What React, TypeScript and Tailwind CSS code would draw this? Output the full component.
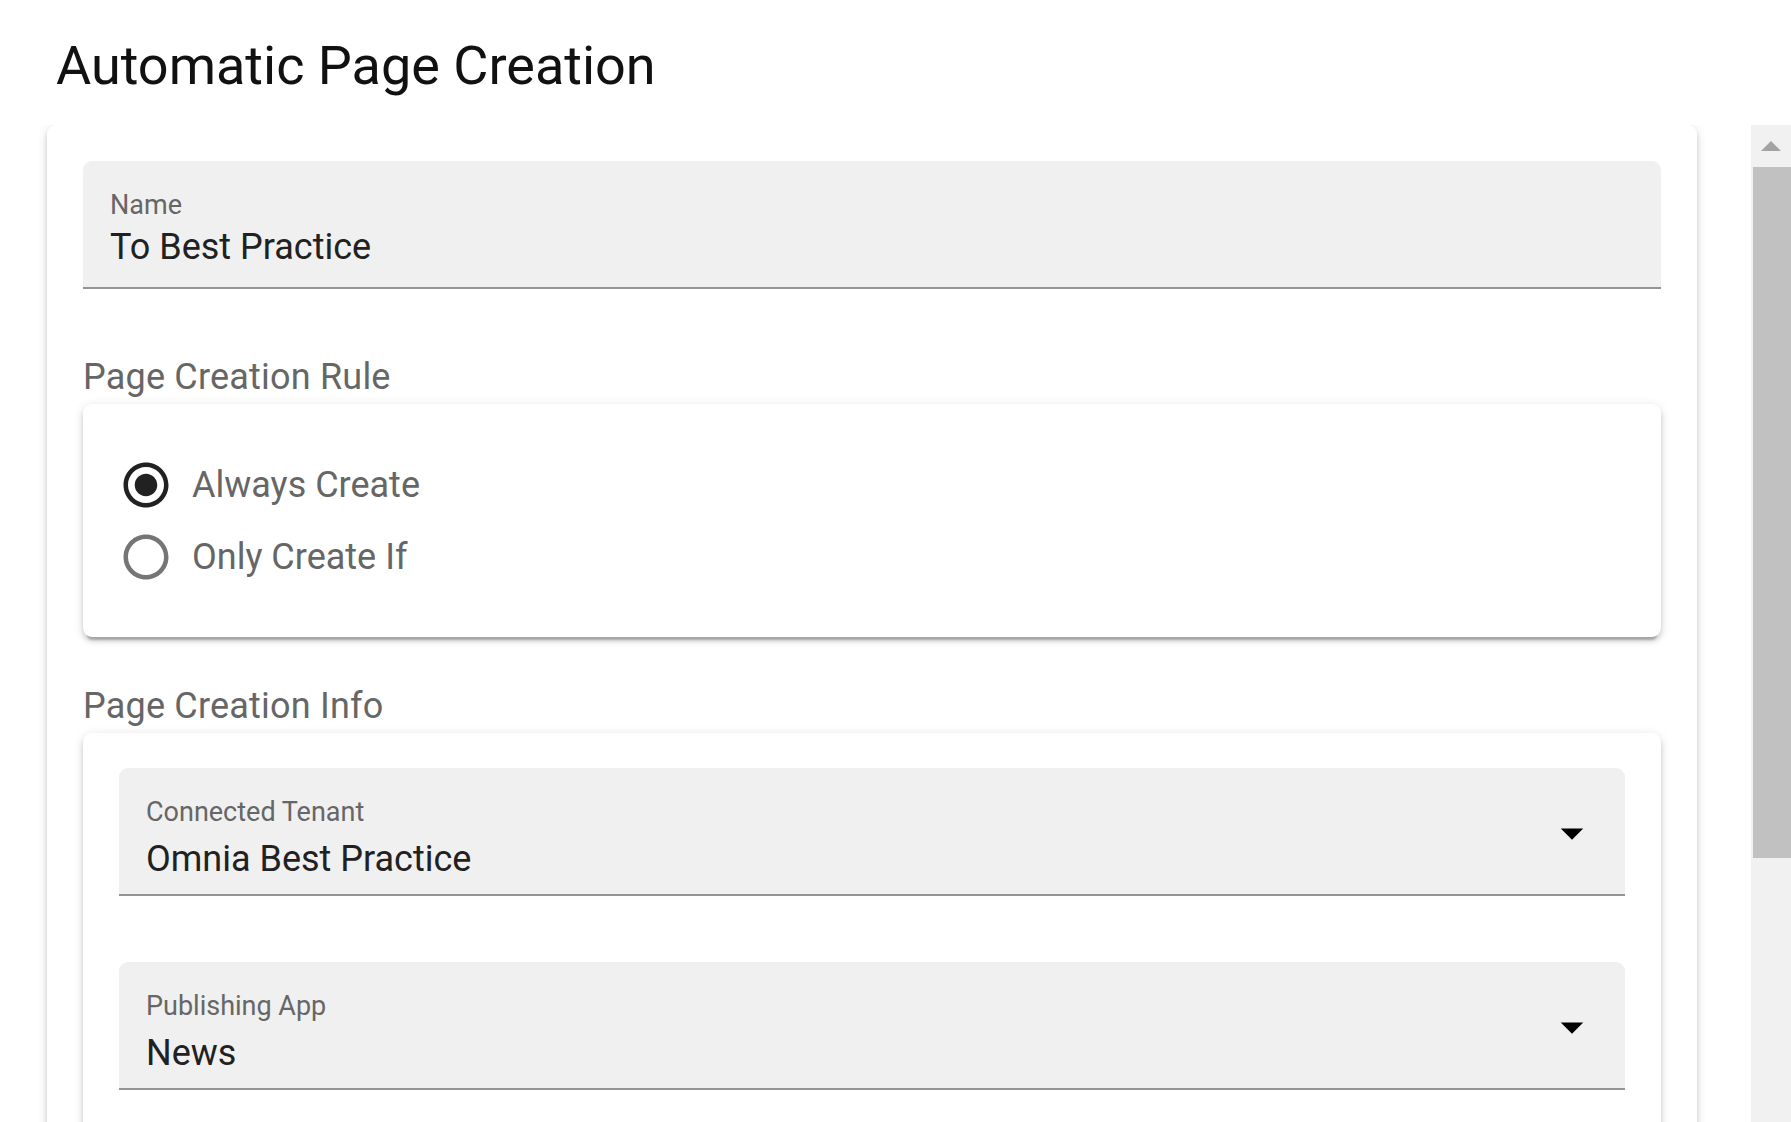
import { ReactNode } from "react";

const FONT = "font-['Roboto','Noto_Sans',sans-serif]";

function TextField({ label, value, select }: { label: string; value: string; select?: boolean }) {
  return (
    <div className="relative h-[128px] rounded-t-[9px] bg-[#f0f0f0] border-b-2 border-[#949494] px-[27px] pt-[28px]">
      <div className="text-[27px] leading-[32px] text-[#666666]">{label}</div>
      <div className={`${select ? "mt-[9px]" : "mt-[4px]"} text-[36px] leading-[44px] text-[#212121]`}>{value}</div>
      {select && (
        <svg
          viewBox="0 0 24 24"
          className="absolute right-[26px] top-[38px] w-[54px] h-[54px]"
          fill="#000000"
        >
          <path d="M7 10l5 5 5-5z" />
        </svg>
      )}
    </div>
  );
}

function Radio({ label, checked }: { label: string; checked?: boolean }) {
  return (
    <div className="flex items-center h-[72px]">
      <svg viewBox="0 0 24 24" className="w-[54px] h-[54px] shrink-0" fill={checked ? "#212121" : "#757575"}>
        {checked ? (
          <path d="M12 7c-2.76 0-5 2.24-5 5s2.24 5 5 5 5-2.24 5-5-2.24-5-5-5zm0-5C6.48 2 2 6.48 2 12s4.48 10 10 10 10-4.48 10-10S17.52 2 12 2zm0 18c-4.42 0-8-3.58-8-8s3.58-8 8-8 8 3.58 8 8-3.58 8-8 8z" />
        ) : (
          <path d="M12 2C6.48 2 2 6.48 2 12s4.48 10 10 10 10-4.48 10-10S17.52 2 12 2zm0 18c-4.42 0-8-3.58-8-8s3.58-8 8-8 8 3.58 8 8-3.58 8-8 8z" />
        )}
      </svg>
      <span className="ml-[19px] text-[36px] leading-[44px] text-[#666666]">{label}</span>
    </div>
  );
}

function Section({ title, children }: { title: string; children: ReactNode }) {
  return (
    <div>
      <div className="text-[36px] leading-[44px] tracking-[0.2px] text-[#666666]">{title}</div>
      {children}
    </div>
  );
}

export default function App() {
  return (
    <div className={`${FONT} h-[1122px] overflow-hidden bg-white`}>
      <h1 className="pt-[34px] pl-[56px] text-[54px] leading-[64px] font-normal text-[#111111]">
        Automatic Page Creation
      </h1>

      <div className="mt-[27px] flex h-[997px]">
        {/* scroll content */}
        <div className="flex-1 overflow-hidden">
          <div className="ml-[47px] w-[1650px] h-[1400px] rounded-[9px] bg-white p-[36px] shadow-[0_7px_2px_-4px_rgba(0,0,0,0.2),0_4px_5px_0_rgba(0,0,0,0.14),0_2px_11px_0_rgba(0,0,0,0.12)]">
            <TextField label="Name" value="To Best Practice" />

            <div className="mt-[66px]">
              <Section title="Page Creation Rule">
                <div className="mt-[5px] h-[233px] rounded-[9px] bg-white pl-[36px] pt-[45px] shadow-[0_7px_2px_-4px_rgba(0,0,0,0.2),0_4px_5px_0_rgba(0,0,0,0.14),0_2px_11px_0_rgba(0,0,0,0.12)]">
                  <Radio label="Always Create" checked />
                  <Radio label="Only Create If" />
                </div>
              </Section>
            </div>

            <div className="mt-[47px]">
              <Section title="Page Creation Info">
                <div className="mt-[5px] rounded-[9px] bg-white px-[36px] pt-[35px] pb-[60px] shadow-[0_7px_2px_-4px_rgba(0,0,0,0.2),0_4px_5px_0_rgba(0,0,0,0.14),0_2px_11px_0_rgba(0,0,0,0.12)]">
                  <TextField label="Connected Tenant" value="Omnia Best Practice" select />
                  <div className="mt-[66px]">
                    <TextField label="Publishing App" value="News" select />
                  </div>
                  <div className="h-[200px]" />
                </div>
              </Section>
            </div>
          </div>
        </div>

        {/* scrollbar */}
        <div className="w-[40px] shrink-0 flex flex-col bg-[#f1f1f1]">
          <div className="h-[42px] flex items-center justify-center">
            <svg viewBox="0 0 20 10" className="w-[20px] h-[10px]" fill="#a3a3a3">
              <path d="M0 10 L10 0 L20 10 Z" />
            </svg>
          </div>
          <div className="ml-[2px] h-[691px] bg-[#c1c1c1]" />
        </div>
      </div>
    </div>
  );
}
